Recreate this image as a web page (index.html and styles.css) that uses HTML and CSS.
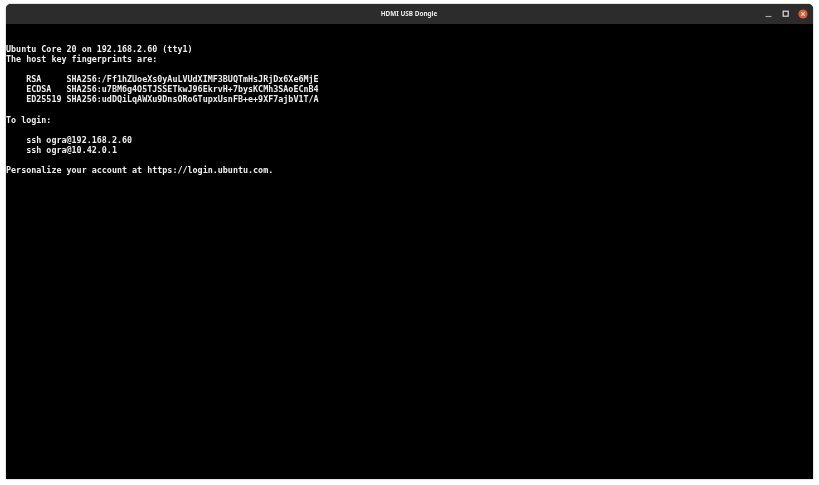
FILE: index.html
```html
<!DOCTYPE html>
<html lang="en">
<head>
<meta charset="utf-8">
<title>HDMI USB Dongle</title>
<link rel="stylesheet" href="styles.css">
</head>
<body>
<main class="window">
  <header class="titlebar">
    <span class="spacer"></span>
    <h1 class="title">HDMI USB Dongle</h1>
    <div class="controls">
      <svg class="ctl" width="10" height="10" viewBox="0 0 10 10"><path d="M1.5 7.5h6" stroke="#a8a8a8" stroke-width="1.1"/></svg>
      <svg class="ctl" width="10" height="10" viewBox="0 0 10 10"><rect x="2.2" y="2.2" width="5" height="5" fill="none" stroke="#dcdcdc" stroke-width="1.2"/></svg>
      <svg class="ctl" width="10" height="10" viewBox="0 0 10 10"><circle cx="5" cy="5" r="4.6" fill="#e2572c"/><path d="M3.2 3.2l3.6 3.6M6.8 3.2l-3.6 3.6" stroke="#f5e0d8" stroke-width="1.1"/></svg>
    </div>
  </header>
  <pre class="console">Ubuntu Core 20 on 192.168.2.60 (tty1)
The host key fingerprints are:

    RSA     SHA256:/Ff1hZUoeXs0yAuLVUdXIMF3BUQTmHsJRjDx6Xe6MjE
    ECDSA   SHA256:u7BM6g4O5TJSSETkwJ96EkrvH+7bysKCMh3SAoECnB4
    ED25519 SHA256:udDQiLqAWXu9DnsORoGTupxUsnFB+e+9XF7ajbV1T/A

To login:

    ssh ogra@192.168.2.60
    ssh ogra@10.42.0.1

Personalize your account at https://login.ubuntu.com.</pre>
</main>
</body>
</html>
```
FILE: styles.css
```css
html, body {
  margin: 0;
  height: 100%;
  background: #fff;
  overflow: hidden;
}
body {
  padding: 4px 6px 6px 6px;
  box-sizing: border-box;
}
.window {
  width: 807px;
  height: 475px;
  display: flex;
  flex-direction: column;
  background: #000;
  border-radius: 5px 5px 0 0;
  overflow: hidden;
  box-shadow: 0 0 1.5px rgba(0, 0, 0, 0.55);
}
.titlebar {
  flex: 0 0 20px;
  display: flex;
  align-items: center;
  background: #2c2c2c;
}
.spacer { flex: 1 1 0; }
.title {
  margin: 0;
  padding-left: 4px;
  font: bold 6.4px/1 "Noto Sans", "Liberation Sans", sans-serif;
  color: #ececec;
  filter: blur(0.35px);
}
.controls {
  flex: 1 1 0;
  box-sizing: border-box;
  display: flex;
  justify-content: flex-end;
  align-items: center;
  gap: 7px;
  padding-right: 5px;
}
.ctl { display: block; filter: blur(0.3px); }
.console {
  margin: 0;
  padding-top: 20px;
  font: bold 8.4px/10.1px "DejaVu Sans Mono", "Liberation Mono", monospace;
  color: #eeeeee;
  white-space: pre;
  filter: blur(0.45px);
}
```
